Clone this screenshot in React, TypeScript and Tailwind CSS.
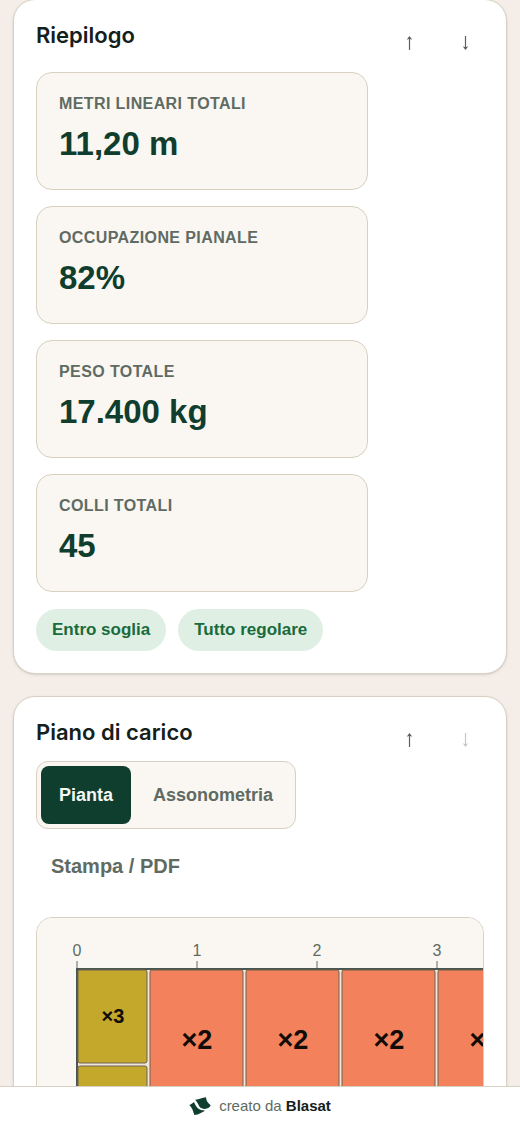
import React from "react";

const stats = [
  { label: "Metri lineari totali", value: "11,20 m" },
  { label: "Occupazione pianale", value: "82%" },
  { label: "Peso totale", value: "17.400 kg" },
  { label: "Colli totali", value: "45" },
];

// Plan scale: 120px per metre
const SCALE = 120;
const LENGTH = 3.8;
const DEPTH = 2.4;

type Load = { x: number; y: number; w: number; h: number; label: string; fill: string; size: number };

const small: Load[] = [0, 0.8, 1.6].map((y) => ({
  x: 0, y, w: 0.6, h: 0.8, label: "×3", fill: "#c4a82b", size: 20,
}));

const large: Load[] = [0.6, 1.4, 2.2, 3].flatMap((x) =>
  [0, 1.2].map((y) => ({
    x, y, w: 0.8, h: 1.2, label: "×2", fill: "#f3815b", size: 27,
  }))
);

const loads = [...small, ...large];
const metres = [0, 1, 2, 3];

const Arrow = ({ className = "" }: { className?: string }) => (
  <svg width="7" height="14" viewBox="0 0 7 14" aria-hidden="true" className={className}>
    <path d="M3.5 1V14" stroke="currentColor" strokeWidth="1.2" />
    <path d="M3.5 0L6.3 3.8L3.5 2.8L0.7 3.8Z" fill="currentColor" />
  </svg>
);

const MoveButtons = ({ last = false }: { last?: boolean }) => (
  <div className="flex shrink-0 gap-[18px]">
    <button
      type="button"
      aria-label="Sposta su"
      className="flex h-[42px] w-[38px] items-center justify-center rounded-lg text-[#5a605c]"
    >
      <Arrow />
    </button>
    <button
      type="button"
      aria-label="Sposta giù"
      disabled={last}
      className="flex h-[42px] w-[38px] items-center justify-center rounded-lg text-[#5a605c] disabled:opacity-35"
    >
      <Arrow className="rotate-180" />
    </button>
  </div>
);

const Title = ({ children }: { children: React.ReactNode }) => (
  <h2 className="font-['Inter',sans-serif] text-[22px] leading-[26px] font-semibold text-[#14201b]">
    {children}
  </h2>
);

const Summary = () => (
  <section className="-mt-px flex gap-[22px] rounded-[22px] border border-[#d8d0c2] bg-white p-[22px] shadow-sm">
    <div className="min-w-0 flex-1">
      <Title>Riepilogo</Title>
      <dl className="mt-6 grid gap-4">
        {stats.map((s) => (
          <div key={s.label} className="rounded-2xl border border-[#d8d0c0] bg-[#faf7f2] px-[22px] py-5">
            <dt className="text-base leading-[22px] font-bold tracking-wide text-[#5f6b62] uppercase">
              {s.label}
            </dt>
            <dd className="mt-1 text-[33px] leading-[50px] font-bold text-[#0f3d2e]">{s.value}</dd>
          </div>
        ))}
      </dl>
      <div className="mt-[17px] flex flex-wrap gap-3 text-[17px] leading-[42px] font-bold text-[#1a6b3c]">
        <span className="rounded-full bg-[#dfefe3] px-4">Entro soglia</span>
        <span className="rounded-full bg-[#dfefe3] px-4">Tutto regolare</span>
      </div>
    </div>
    <MoveButtons />
  </section>
);

const FloorPlan = () => (
  <div className="overflow-x-auto rounded-2xl border border-[#d8d0c0] bg-[#faf7f2] [scrollbar-width:none]">
    <svg width={536} height={380} className="block max-w-none" role="img" aria-label="Pianta del carico">
      <g transform="translate(40 51)">
        {metres.map((m) => (
          <g key={m}>
            <text x={m * SCALE} y={-13} textAnchor="middle" fontSize={16} fill="#5f6b62">
              {m}
            </text>
            <line x1={m * SCALE} x2={m * SCALE} y1={-8} y2={0} stroke="#5f6b62" />
          </g>
        ))}
        <rect
          width={LENGTH * SCALE}
          height={DEPTH * SCALE}
          fill="#efe5da"
          stroke="#4b554f"
          strokeWidth={2}
        />
        {loads.map((l) => (
          <g key={`${l.x}-${l.y}`}>
            <rect
              x={l.x * SCALE + 1}
              y={l.y * SCALE + 1}
              width={l.w * SCALE - 3}
              height={l.h * SCALE - 3}
              rx={2}
              fill={l.fill}
              stroke="#6f6350"
            />
            <text
              x={(l.x + l.w / 2) * SCALE}
              y={(l.y + l.h / 2) * SCALE + l.size * 0.31}
              textAnchor="middle"
              fontSize={l.size}
              fontWeight={700}
              fill="#120c08"
            >
              {l.label}
            </text>
          </g>
        ))}
      </g>
    </svg>
  </div>
);

const LoadPlan = () => (
  <section className="mt-[22px] rounded-[22px] border border-[#d8d0c2] bg-white p-[22px] shadow-sm">
    <div className="flex items-start justify-between">
      <Title>Piano di carico</Title>
      <MoveButtons last />
    </div>
    <div className="inline-flex gap-1 rounded-xl border border-[#d8d0c0] bg-[#faf7f2] p-1 align-top text-lg leading-[58px] font-bold">
      <button type="button" aria-pressed="true" className="rounded-lg bg-[#0f3d2e] px-[18px] text-[#f4f7f2]">
        Pianta
      </button>
      <button type="button" aria-pressed="false" className="rounded-lg px-[18px] text-[#5f6b62]">
        Assonometria
      </button>
    </div>
    <div className="mt-2 mb-[22px]">
      <button type="button" className="block px-[15px] text-xl leading-[58px] font-bold text-[#5f6b62]">
        Stampa / PDF
      </button>
    </div>
    <FloorPlan />
  </section>
);

const Footer = () => (
  <footer className="flex h-[39px] shrink-0 items-center justify-center gap-2 border-t border-[#d8d0c2] bg-white text-[15px] leading-5 text-[#5f6b62]">
    <svg width="22" height="18" viewBox="0 0 66 54" fill="#0f3d2e" aria-hidden="true">
      <path d="M18 8C29 9 39 2 51 1C51 11 57 19 65 25C60 37 47 37 38 34C29 30 27 16 18 8Z" />
      <path d="M1 24C6 22 10 20 15 15C19 24 23 33 31 37C36 40 41 40 48 41C39 45 30 53 16 54C12 43 10 32 1 24Z" />
    </svg>
    <span>
      creato da <strong className="font-bold text-[#14201b]">Blasat</strong>
    </span>
  </footer>
);

export default function App() {
  return (
    <div className="flex h-screen flex-col bg-[#f5eee8] font-['Liberation_Sans',Arial,sans-serif]">
      <main className="min-h-0 flex-1 overflow-y-auto px-[13px] pb-6 [scrollbar-width:none]">
        <Summary />
        <LoadPlan />
      </main>
      <Footer />
    </div>
  );
}
